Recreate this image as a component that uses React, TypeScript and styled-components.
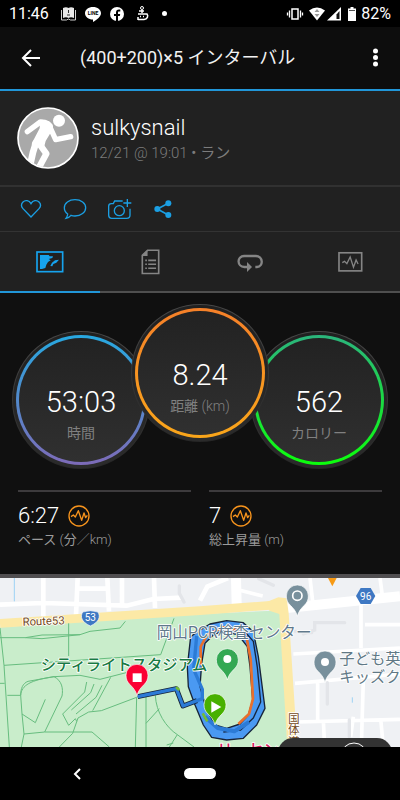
import React from "react";
import styled, { createGlobalStyle } from "styled-components";

const Global = createGlobalStyle`
  *, *::before, *::after { box-sizing: border-box; }
  body {
    margin: 0;
    background: #000;
    color: #fff;
    font-family: Roboto, "Noto Sans CJK JP", sans-serif;
  }
  button {
    border: 0;
    padding: 0;
    background: none;
    color: inherit;
    font: inherit;
    cursor: pointer;
  }
  svg { display: block; }
`;

const Screen = styled.div`
  display: flex;
  flex-direction: column;
  min-height: 100vh;
  background: #101010;
`;

const StatusBar = styled.div`
  display: flex;
  align-items: center;
  height: 27px;
  padding: 0 9px;
  background: #000;
  font-size: 16px;
  line-height: 20px;
`;

const StatusGroup = styled.div<{ $gap: number; $push?: boolean }>`
  display: flex;
  align-items: center;
  gap: ${(p) => p.$gap}px;
  margin-left: ${(p) => (p.$push ? "auto" : "12px")};
`;

const Header = styled.header`
  display: flex;
  align-items: center;
  height: 64px;
  padding: 0 15px 0 20px;
  background: #0d0d0d;
  border-bottom: 2px solid #2196d8;
`;

const IconButton = styled.button`
  display: flex;
  align-items: center;
  justify-content: center;
  height: 40px;
`;

const Title = styled.h1`
  flex: 1;
  margin: 0 0 0 38px;
  font-size: 18px;
  font-weight: 400;
  line-height: 24px;
  color: #f2f2f2;
`;

const Profile = styled.section`
  display: flex;
  align-items: center;
  gap: 12px;
  height: 96px;
  padding: 0 17px;
  background: #212121;
  border-bottom: 2px solid #313131;
`;

const UserName = styled.div`
  padding-top: 2px;
  font-size: 22px;
  font-weight: 300;
  line-height: 28px;
`;

const Meta = styled.div`
  font-size: 15px;
  font-weight: 300;
  line-height: 22px;
  color: #7c7c7c;
`;

const Ja = styled.span`
  font-weight: 400;
`;

const Actions = styled.div`
  display: flex;
  align-items: center;
  gap: 21px;
  height: 44px;
  padding: 0 20px;
  background: #212121;
  color: #1b9fe3;
`;

const Tabs = styled.div`
  display: grid;
  grid-template-columns: repeat(4, 1fr);
  border-top: 1px solid #333;
  background: #212121;
`;

const Tab = styled.button<{ $active?: boolean }>`
  display: flex;
  align-items: center;
  justify-content: center;
  height: 61px;
  color: ${(p) => (p.$active ? "#16a3ee" : "#858585")};
  border-bottom: 2px solid ${(p) => (p.$active ? "#2196d8" : "#4f4f4f")};
`;

const Gauges = styled.section`
  display: flex;
  justify-content: center;
  align-items: flex-end;
  padding-top: 11px;
`;

const Gauge = styled.div<{ $raised?: boolean }>`
  position: relative;
  z-index: ${(p) => (p.$raised ? 1 : 0)};
  width: 138px;
  height: 138px;
  padding: 3px;
  margin: ${(p) => (p.$raised ? "0 -19px 27px" : "0")};
  border: 1px solid transparent;
  border-radius: 50%;
  background:
    linear-gradient(#202020, #2b2b2b) padding-box,
    linear-gradient(#484848, #262626) border-box;
`;

const Ring = styled.div<{ $from: string; $to: string }>`
  display: flex;
  flex-direction: column;
  align-items: center;
  height: 100%;
  padding-top: 48px;
  border: 3px solid transparent;
  border-radius: 50%;
  background:
    linear-gradient(#222, #303030) padding-box,
    linear-gradient(${(p) => p.$from}, ${(p) => p.$to}) border-box;
`;

const GaugeValue = styled.div`
  font-size: 29px;
  font-weight: 300;
  line-height: 32px;
`;

const GaugeLabel = styled.div`
  margin-top: 5px;
  font-size: 14px;
  font-weight: 300;
  line-height: 20px;
  color: #808080;
`;

const Stats = styled.section`
  display: grid;
  grid-template-columns: 1fr 1fr;
  gap: 18px;
  padding: 21px 18px 0;
`;

const Stat = styled.div`
  height: 84px;
  padding-top: 11px;
  border-top: 2px solid #3d3b3d;
`;

const StatValue = styled.div`
  display: flex;
  align-items: center;
  gap: 9px;
  font-size: 22px;
  font-weight: 300;
  line-height: 26px;
`;

const StatLabel = styled.div`
  padding-top: 1px;
  font-size: 13px;
  font-weight: 300;
  line-height: 20px;
  color: #9c9c9c;
`;

const MapPanel = styled.section`
  position: relative;
  flex: 1;
  min-height: 173px;
  overflow: hidden;
  border-top: 4px solid #504e50;
  background: #f0f1f4;
`;

const MapCanvas = styled.svg`
  width: 100%;
  height: 169px;
  font-family: Roboto, "Noto Sans CJK JP", sans-serif;
`;

const VerticalLabel = styled.text`
  writing-mode: vertical-rl;
`;

const LayerButton = styled.button`
  position: absolute;
  right: 8px;
  bottom: -22px;
  display: flex;
  justify-content: flex-end;
  width: 114px;
  height: 31px;
  padding: 4px 24px 0;
  overflow: hidden;
  border-radius: 15px 15px 0 0;
  background: #333;
`;

const NavBar = styled.nav`
  display: grid;
  grid-template-columns: 1fr 32px 1fr;
  align-items: center;
  height: 53px;
  background: #000;
`;

const BackKey = styled.button`
  display: flex;
  justify-content: center;
  margin-right: 30px;
`;

const HomeKey = styled.button`
  height: 11px;
  border-radius: 6px;
  background: #fff;
`;

const Pulse = () => (
  <svg width="22" height="22" viewBox="205 88 66 66" fill="none" stroke="#f7941d" aria-hidden="true">
    <circle cx="238" cy="121" r="30" strokeWidth="4" />
    <path d="M214 123l7-5 6 6 9-19 10 29 7-22 5 14 5-7" strokeWidth="4" strokeLinejoin="round" />
  </svg>
);

const Avatar = () => (
  <svg width="62" height="62" viewBox="52 58 186 186" role="img" aria-label="sulkysnail">
    <defs>
      <clipPath id="face"><circle cx="145" cy="151" r="88" /></clipPath>
    </defs>
    <circle cx="145" cy="151" r="90" fill="#a9a9a9" stroke="#fff" strokeWidth="5" />
    <g clipPath="url(#face)" fill="none" stroke="#fff" strokeLinecap="round" strokeLinejoin="round">
      <circle cx="178" cy="99" r="18" fill="#fff" stroke="none" />
      <path d="M83 132l39-29 22 5" strokeWidth="16" />
      <path d="M122 96c14-3 28 4 36 14 4 6 2 14-2 20l-18 30-4 16-34 2c-6-6-4-14 2-22l18-34z" fill="#fff" stroke="none" />
      <path d="M148 112l20 44 45-9" strokeWidth="16" />
      <path d="M108 168l-8 26-9 40" strokeWidth="20" />
      <path d="M120 170l20 28-20 38" strokeWidth="19" />
    </g>
  </svg>
);

const Marker = ({ x, y, color }: { x: number; y: number; color: string }) => (
  <path
    transform={`translate(${x} ${y})`}
    d="M0 0c-4-16-12-24-21-33-8-8-12-16-12-28a33 33 0 0 1 66 0c0 12-4 20-12 28-9 9-17 17-21 33z"
    fill={color}
    stroke="#fff"
    strokeWidth="2"
  />
);

const CourseMap = () => (
  <MapCanvas viewBox="0 24 1200 507" preserveAspectRatio="xMidYMin slice" role="img" aria-label="Map">
    <rect y="24" width="1200" height="507" fill="#eff1f4" />
    <g fill="none" stroke="#fff" strokeWidth="14">
      <path d="M0 104l130-5 250 8 80-20 85-4M130 24v120M233 24l-5 112M322 24l5 100M366 24v80M462 24l3 90M233 56h90M600 92l22-42 62-26" />
      <path d="M716 24v78M708 58l80 20 M930 24l8 70M1140 24l8 60M880 252l320-18M885 340l315-28M953 340v115M890 456l310-8M1090 330l-6 200M1142 446l8 85M1083 100v134M1095 164h105M970 452l4 80M1060 440l-8 60" strokeWidth="11" />
      <path d="M710 102l-2-78M860 114l340-35" strokeWidth="30" />
    </g>
    <g fill="none" stroke="#e3e5e9" strokeWidth="10" strokeLinecap="round">
      <path d="M538 48v22l14 26M776 26l44 20M910 192l34-12v-22h90M982 338v64M1048 450v50M885 184l50 4" />
    </g>
    <path d="M43 24v70M1057 382v16" stroke="#9dd2f4" strokeWidth="3" />
    <path d="M0 172l600-40 220-10 26 10 16 399H0z" fill="#c9edcb" />
    <path d="M0 160l600-38 240-18" fill="none" stroke="#fce9a6" strokeWidth="26" />
    <path d="M800 96l35-14 25 3 6 45 26 401h-30L838 132l-30-10z" fill="#fce9a6" />
    <g fill="none" stroke="#67bd7f" strokeWidth="3">
      <path d="M0 174l12 112 16 245M0 203h76l50-8 114-1 30-10 90-10 16-20M76 203l50 3 114-12M206 160v98M12 286l470-32 20-54 20-55" />
      <path d="M0 340h14M22 376h40c0-20 6-36 22-42l78-14 78-4 60 12 110-28M162 320c24 12 28 36 24 58l-52 108M162 320c-70 10-98 26-100 56l4 56 40 26 30-70M66 432l6 60-8 39M72 492l62-6h142l52 45M332 322l-54 100M410 382l-106 40-38 4-32 18-16 46-40 41M260 336l-6 30-66 66 18 34 20-20 4 8M282 342l-10 26-58 52M306 346l-18 36-60 50" />
      <path d="M410 382l-4 149M438 370v161M466 376c2 50 32 96 66 118l50 37M438 460l40-44M532 494l-24 37M500 525l20-6" />
    </g>
    <g fill="none" strokeLinejoin="round">
      <path d="M592 185l38-23 50-10 50 6 30 27 15 75 20 155-25 50-40 40-50 5-45-8-25-37-25-60-20-55-3-60 10-90zM615 220l25-25 30-13 45 13 27 35 8 60 8 100-13 45-25 27-40 13-35-10-25-45-20-70 5-70z" fill="#4a99f2" fillRule="evenodd" stroke="#17243a" strokeWidth="4" />
      <path d="M602 285v-55l20-36 48-22 40 8 30 24 12 64 7 118-12 46-32 30" stroke="#e8702d" strokeWidth="8" />
      <path d="M734 184l26 30 12 78 10 104-22 48-38 36-52 6" stroke="#17243a" strokeWidth="4" />
      <path d="M413 380l116-24 20 52 42-16" stroke="#17243a" strokeWidth="15" />
      <path d="M413 380l116-24 20 52 58-22v-28l-26-60 9-100" stroke="#2c7bd6" strokeWidth="10" />
      <path d="M615 440l38 34 50 10 44-28" stroke="#2c7bd6" strokeWidth="12" />
      <path d="M528 352l10 8M608 430l14 24" stroke="#73bd36" strokeWidth="8" />
    </g>
    <Marker x={682} y={330} color="#34a853" />
    <circle cx="682" cy="267" r="12" fill="#fff" />
    <Marker x={892} y={139} color="#78909c" />
    <circle cx="892" cy="77" r="14" fill="none" stroke="#fff" strokeWidth="5" />
    <Marker x={975} y={337} color="#78909c" />
    <circle cx="975" cy="276" r="12" fill="#fff" />
    <path d="M984 24h26l-13 25z" fill="#f79a14" />
    <path d="M248 126q23-8 46 0c8 14 4 30-23 42-27-12-31-28-23-42z" fill="#3e78c3" stroke="#fff" strokeWidth="2" />
    <path d="M1082 54h30l14 24-14 24h-30l-14-24z" fill="#3e78c3" />
    <g fill="#fff" fontSize="30" textAnchor="middle">
      <text x="271" y="154">53</text>
      <text x="1097" y="89">96</text>
    </g>
    <g stroke="#fff" strokeWidth="5" strokeLinejoin="round" paintOrder="stroke">
      <text x="68" y="167" fontSize="34" fill="#73491c" transform="rotate(-2 68 167)">Route53</text>
      <text x="470" y="204" fontSize="47" fill="#60798b">岡山PCR検査センター</text>
      <text x="122" y="301" fontSize="46" fontWeight="500" fill="#187a43">シティライトスタジアム</text>
      <g fontSize="46" fill="#607885">
        <text x="1018" y="283">子ども英</text>
        <text x="1018" y="336">キッズク</text>
      </g>
      <VerticalLabel x="877" y="427" fontSize="35" fill="#73491c">国体道</VerticalLabel>
      <text x="652" y="555" fontSize="46" fontWeight="500" fill="#d81b60">リーセンター</text>
    </g>
    <Marker x={411} y={377} color="#fb0032" />
    <rect x="398" y="310" width="27" height="26" fill="#fff" />
    <Marker x={645} y={465} color="#48b000" />
    <path d="M634 394l30 17-30 17z" fill="#fff" />
  </MapCanvas>
);

export default function App() {
  return (
    <Screen>
      <Global />
      <StatusBar>
        <span>11:46</span>
        <StatusGroup $gap={9}>
          <svg width="15" height="14" viewBox="0 0 15 14" aria-hidden="true">
            <path d="M2 1c2-1 4-1 5.500 0 1.500-1 3.500-1 5.500 0v10c-2-1-4-1-5.500 0-1.500-1-3.500-1-5.500 0z" fill="#e8e8e8" />
            <path d="M.5 3v10h5l2-1 2 1h5V3" fill="none" stroke="#d0d0d0" />
            <path d="M7.500 3v3M6 8h3" stroke="#333" />
          </svg>
          <svg width="16" height="16" viewBox="0 0 16 16" aria-hidden="true">
            <path d="M8 1c4.500 0 8 2.700 8 6.200 0 3.600-4.500 6.500-8 8.800v-2.500c-4.500 0-8-2.700-8-6.300S3.500 1 8 1z" fill="#fff" />
            <text x="8" y="9" fontSize="5" fontWeight="700" textAnchor="middle">LINE</text>
          </svg>
          <svg width="14" height="14" viewBox="0 0 14 14" aria-hidden="true">
            <circle cx="7" cy="7" r="7" fill="#fff" />
            <path d="M6 14V9H4V7h2V5.500C6 3.500 7 2.500 9 2.500h1.300v2H9c-.8 0-1 .4-1 1V7h2.200l-.4 2H8v5z" fill="#000" />
          </svg>
          <svg width="20" height="15" viewBox="0 0 20 15" fill="none" stroke="#fff" aria-hidden="true">
            <circle cx="9" cy="2" r="1.500" />
            <path d="M9 4v3M6 5h5" strokeWidth="1.500" />
            <path d="M5 8h9c1.500 2 .5 5-3 5.500H5" strokeWidth="1.500" />
            <path d="M7 10.500h1M10 10.500h1M5 14v-3" strokeWidth="1.500" />
          </svg>
          <svg width="5" height="5" viewBox="0 0 5 5" aria-hidden="true"><circle cx="2.500" cy="2.500" r="2.500" fill="#fff" /></svg>
        </StatusGroup>
        <StatusGroup $gap={5} $push>
          <svg width="18" height="14" viewBox="0 0 18 14" fill="none" stroke="#fff" aria-hidden="true">
            <rect x="6" y="2" width="6" height="10" strokeWidth="1.500" />
            <path d="M3.500 3.500v7M14.500 3.500v7M1.500 5.500v3M16.500 5.500v3" strokeWidth="1.300" />
          </svg>
          <svg width="34" height="14" viewBox="0 0 34 14" aria-hidden="true">
            <path d="M0 3.500Q8-2.500 16 3.500L8 13.500z" fill="#fff" />
            <path d="M8 2l2.500 3h-5zM8 10L5.500 7h5z" fill="#999" />
            <path d="M32 0v13.500H18z" fill="#fff" />
            <path d="M30.500 4v8h-3V7.500z" fill="#111" />
          </svg>
          <svg width="8" height="14" viewBox="0 0 8 14" aria-hidden="true">
            <path d="M2.500 0h3v1.500H8V14H0V1.500h2.500z" fill="#fff" />
            <path d="M1 3.500h6" stroke="#555" />
          </svg>
          <span>82%</span>
        </StatusGroup>
      </StatusBar>

      <Header>
        <IconButton aria-label="Back">
          <svg width="22" height="18" viewBox="0 0 22 18" fill="none" stroke="#fff" strokeWidth="2">
            <path d="M20 9H4M11 1L3 9l8 8" />
          </svg>
        </IconButton>
        <Title>(400+200)×5 インターバル</Title>
        <IconButton aria-label="Menu">
          <svg width="18" height="20" viewBox="0 0 18 20" fill="#fff">
            <circle cx="8.500" cy="3" r="2.500" /><circle cx="8.500" cy="9.500" r="2.500" /><circle cx="8.500" cy="16" r="2.500" />
          </svg>
        </IconButton>
      </Header>

      <Profile>
        <Avatar />
        <div>
          <UserName>sulkysnail</UserName>
          <Meta>12/21 @ 19:01 <Ja>• ラン</Ja></Meta>
        </div>
      </Profile>

      <Actions>
        <IconButton aria-label="Like">
          <svg width="22" height="20" viewBox="60 332 66 60" fill="none" stroke="currentColor" strokeWidth="4">
            <path d="M93 386L69 361c-6-7-5-15 0-20 7-7 18-5 24 5 6-10 17-12 24-5 5 5 6 13 0 20z" />
          </svg>
        </IconButton>
        <IconButton aria-label="Comment">
          <svg width="24" height="22" viewBox="192 329 72 66" fill="none" stroke="currentColor" strokeWidth="4">
            <path d="M206 377c-7-5-10-11-10-19 0-14 14-24 32-24s32 10 32 24-14 25-32 25c-5 0-9-1-12-2-4 5-9 8-15 9 3-4 5-8 5-13z" />
          </svg>
        </IconButton>
        <IconButton aria-label="Add photo">
          <svg width="24" height="22" viewBox="326 332 72 66" fill="none" stroke="currentColor" strokeWidth="4">
            <path d="M370 341h-24l-4 8h-6q-8 0-8 8v27q0 9 9 9h45q10 0 10-9v-20M372 347h24M384 335v24" />
            <circle cx="360" cy="370" r="15" />
          </svg>
        </IconButton>
        <IconButton aria-label="Share">
          <svg width="20" height="20" viewBox="464 332 60 60" fill="currentColor">
            <path d="M510 345l-33 17 33 18" fill="none" stroke="currentColor" strokeWidth="5" />
            <circle cx="510" cy="345" r="9" /><circle cx="477" cy="362" r="9" /><circle cx="510" cy="380" r="9" />
          </svg>
        </IconButton>
      </Actions>

      <Tabs role="tablist">
        <Tab role="tab" aria-selected="true" aria-label="Map" $active>
          <svg width="28" height="22" viewBox="108 69 84 66" fill="currentColor">
            <rect x="111" y="72" width="77" height="59" fill="none" stroke="currentColor" strokeWidth="5" />
            <path d="M120 81h26l3 4h10l-2 5-11 3 6 4-8 5-5 8-3 10-10 3h-6zM151 114l5-10 9-7 12-2-8 9-9 4-3 7z" />
          </svg>
        </Tab>
        <Tab role="tab" aria-selected="false" aria-label="Details">
          <svg width="19" height="26" viewBox="420 63 58 78" fill="none" stroke="currentColor" strokeWidth="5">
            <path d="M440 66h34v71h-50V82z" /><path d="M424 82l16-16v18h-16z" fill="currentColor" stroke="none" />
            <path d="M433 97h5M442 97h24M433 109h5M442 109h24M433 121h5M442 121h24" />
          </svg>
        </Tab>
        <Tab role="tab" aria-selected="false" aria-label="Laps">
          <svg width="26" height="22" viewBox="110 71 78 66" fill="none" stroke="currentColor" strokeWidth="7">
            <path d="M142 119h-10c-22 0-24-33 0-33h34c23 0 24 32 4 33h-5" /><path d="M140 104l15 15-15 15z" fill="currentColor" stroke="none" />
          </svg>
        </Tab>
        <Tab role="tab" aria-selected="false" aria-label="Charts">
          <svg width="25" height="22" viewBox="412 69 76 66" fill="none" stroke="currentColor" strokeWidth="4">
            <rect x="415" y="74" width="69" height="55" strokeWidth="5" />
            <path d="M425 104l7-4 7 7 10-20 10 31 8-22 6 12" />
          </svg>
        </Tab>
      </Tabs>

      <Gauges>
        <Gauge>
          <Ring $from="#28a8e0" $to="#7d6bb8">
            <GaugeValue>53:03</GaugeValue>
            <GaugeLabel><Ja>時間</Ja></GaugeLabel>
          </Ring>
        </Gauge>
        <Gauge $raised>
          <Ring $from="#f58029" $to="#faa61a">
            <GaugeValue>8.24</GaugeValue>
            <GaugeLabel><Ja>距離</Ja> (km)</GaugeLabel>
          </Ring>
        </Gauge>
        <Gauge>
          <Ring $from="#2bb57c" $to="#0cff0c">
            <GaugeValue>562</GaugeValue>
            <GaugeLabel><Ja>カロリー</Ja></GaugeLabel>
          </Ring>
        </Gauge>
      </Gauges>

      <Stats>
        <Stat>
          <StatValue>6:27 <Pulse /></StatValue>
          <StatLabel><Ja>ペース</Ja> (<Ja>分</Ja>／km)</StatLabel>
        </Stat>
        <Stat>
          <StatValue>7 <Pulse /></StatValue>
          <StatLabel><Ja>総上昇量</Ja> (m)</StatLabel>
        </Stat>
      </Stats>

      <MapPanel>
        <CourseMap />
        <LayerButton aria-label="Map layers">
          <svg width="28" height="28" viewBox="0 0 28 28" fill="none" stroke="#fff"><circle cx="14" cy="14" r="13" /></svg>
        </LayerButton>
      </MapPanel>

      <NavBar>
        <BackKey aria-label="Back">
          <svg width="8" height="12" viewBox="0 0 8 12" fill="none" stroke="#fff" strokeWidth="2"><path d="M7 1L2 6l5 5" /></svg>
        </BackKey>
        <HomeKey aria-label="Home" />
        <span />
      </NavBar>
    </Screen>
  );
}
